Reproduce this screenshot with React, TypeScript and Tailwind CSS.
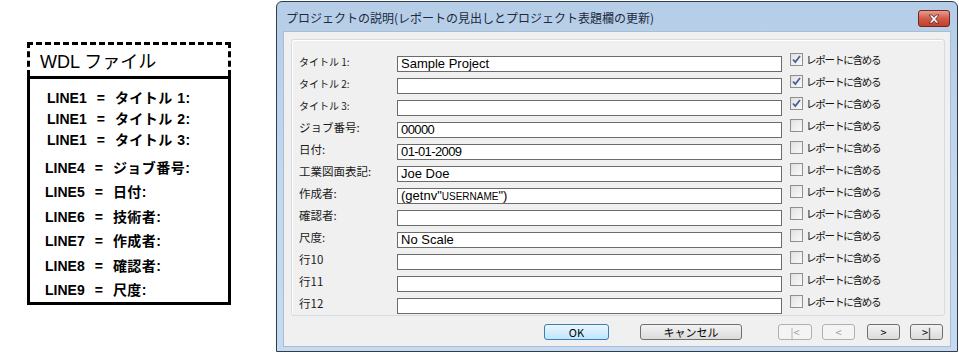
import React from 'react';

const jp = { fontFamily: '"Noto Sans CJK JP", "Liberation Sans", sans-serif' };
const sans = { fontFamily: '"Liberation Sans", "Noto Sans CJK JP", sans-serif' };

type Row = { label: string; value?: React.ReactNode; checked: boolean; small?: boolean };

const rows: Row[] = [
  { label: 'タイトル 1:', value: 'Sample Project', checked: true, small: true },
  { label: 'タイトル 2:', checked: true, small: true },
  { label: 'タイトル 3:', checked: true, small: true },
  { label: 'ジョブ番号:', value: <span className="tracking-[-0.6px]">00000</span>, checked: false },
  { label: '日付:', value: <span className="tracking-[-0.6px]">01-01-2009</span>, checked: false },
  { label: '工業図面表記:', value: 'Joe Doe', checked: false },
  {
    label: '作成者:',
    value: (
      <span>
        (getnv"<span className="text-[10px]">USERNAME</span>")
      </span>
    ),
    checked: false,
  },
  { label: '確認者:', checked: false },
  { label: '尺度:', value: 'No Scale', checked: false },
  { label: '行10', checked: false },
  { label: '行11', checked: false },
  { label: '行12', checked: false },
];

const wdlLines: [string, string][] = [
  ['LINE1', 'タイトル 1:'],
  ['LINE1', 'タイトル 2:'],
  ['LINE1', 'タイトル 3:'],
  ['LINE4', 'ジョブ番号:'],
  ['LINE5', '日付:'],
  ['LINE6', '技術者:'],
  ['LINE7', '作成者:'],
  ['LINE8', '確認者:'],
  ['LINE9', '尺度:'],
];

const CheckBox = ({ checked }: { checked: boolean }) => (
  <div className="w-[13px] h-[13px] border border-[#8e8f8f] bg-gradient-to-br from-[#dcdcdc] to-[#fbfbfb] p-[1px] shrink-0">
    <div className="w-full h-full bg-gradient-to-br from-[#e4e4e4] to-[#f7f7f7] flex items-center justify-center">
      {checked && (
        <svg width="9" height="9" viewBox="0 0 9 9">
          <path d="M1 4.5 L3.3 7 L8 1" fill="none" stroke="#4a5f97" strokeWidth="1.8" />
        </svg>
      )}
    </div>
  </div>
);

const WinButton = ({
  children,
  className,
  variant = 'normal',
}: {
  children: React.ReactNode;
  className: string;
  variant?: 'default' | 'normal' | 'disabled';
}) => (
  <div
    className={`h-[16px] rounded-[3px] border flex items-center justify-center text-[11px] leading-none ${
      variant === 'default'
        ? 'border-[#3c7fb1] bg-gradient-to-b from-[#eaf6fd] to-[#bee6fd] text-black'
        : variant === 'disabled'
        ? 'border-[#adb2b5] bg-[#f4f4f4] text-[#a0a0a0]'
        : 'border-[#707070] bg-gradient-to-b from-[#f2f2f2] to-[#dcdcdc] text-black'
    } ${className}`}
    style={jp}
  >
    {children}
  </div>
);

export default function App() {
  return (
    <div className="w-[959px] h-[355px] bg-white flex items-start overflow-hidden">
      {/* WDL file box */}
      <div className="ml-[27px] mt-[42px] w-[204px] flex flex-col text-black">
        <div className="h-[34px] border-[3px] border-b-0 border-dashed border-black pl-[10px] pt-[5px]">
          <span className="text-[18px] leading-[22px]" style={sans}>
            WDL ファイル
          </span>
        </div>
        <div className="h-[229px] border-[3px] border-black pt-[8px] pl-[15px] flex flex-col">
          {wdlLines.map(([a, b], i) => (
            <div
              key={i}
              className={`flex items-center text-[14px] font-bold leading-[20px] whitespace-pre ${
                i < 3 ? 'h-[21.5px] pl-[2px]' : 'h-[24.6px]'
              } ${i === 3 ? 'mt-[5px]' : ''}`}
              style={sans}
            >
              <span>{a}</span>
              <span className="mx-[10px]">=</span>
              <span className="tracking-[0.5px]">{b}</span>
            </div>
          ))}
        </div>
      </div>

      {/* dialog */}
      <div className="ml-[45px] mt-[1px] w-[682px] h-[351px] border border-[#2f3d4c] rounded-t-[6px] bg-gradient-to-b from-[#b6cde7] via-[#c3d8ef] to-[#c6dbf1] flex flex-col">
        <div className="h-[29px] flex items-start justify-between pl-[9px] pr-[7px]">
          <div className="pt-[9px] text-[12px] leading-[14px] text-[#1b2a3c]" style={jp}>
            プロジェクトの説明(レポートの見出しとプロジェクト表題欄の更新)
          </div>
          <div className="mt-[8px] w-[32px] h-[17px] rounded-[3px] border border-[#6e2a20] bg-gradient-to-b from-[#e69d8f] via-[#d3594a] to-[#c2412c] flex items-center justify-center">
            <svg width="14" height="10" viewBox="0 0 14 10">
              <path
                d="M2 1 H5 L7 3.3 L9 1 H12 L8.6 5 L12 9 H9 L7 6.7 L5 9 H2 L5.4 5 Z"
                fill="#ffffff"
                stroke="#5a2a24"
                strokeWidth="0.8"
              />
            </svg>
          </div>
        </div>

        <div className="mx-[6px] h-[316px] bg-[#f0f0f0] border border-[#a9bdd3] flex flex-col">
          <div className="mt-[7px] ml-[7px] w-[654px] h-[277px] border border-[#d5dbe0] rounded-[3px] shadow-[inset_1px_1px_0_#ffffff] pt-[13px] pl-[7px] flex flex-col">
            {rows.map((r, i) => (
              <div key={i} className="h-[22px] flex items-start shrink-0">
                <div
                  className={`w-[98px] pt-[2px] leading-[13px] text-[#1a1a1a] ${r.small ? 'text-[10px]' : 'text-[11.5px]'}`}
                  style={jp}
                >
                  {r.label}
                </div>
                <div
                  className="mt-[3px] w-[385px] h-[16px] border border-[#6b6b6b] bg-white pl-[3px] text-[13px] leading-[14px] text-black whitespace-pre overflow-hidden"
                  style={sans}
                >
                  {r.value}
                </div>
                <div className="ml-[8px] flex items-start">
                  <CheckBox checked={r.checked} />
                  <span className="ml-[3px] text-[10.5px] tracking-[-1.2px] leading-[13px] text-[#111111]" style={jp}>
                    レポートに含める
                  </span>
                </div>
              </div>
            ))}
          </div>

          <div className="mt-[8px] flex items-start">
            <WinButton variant="default" className="ml-[260px] w-[65px]">
              OK
            </WinButton>
            <WinButton className="ml-[31px] w-[102px]">キャンセル</WinButton>
            <WinButton variant="disabled" className="ml-[36px] w-[34px]">
              |&lt;
            </WinButton>
            <WinButton variant="disabled" className="ml-[10px] w-[33px]">
              &lt;
            </WinButton>
            <WinButton className="ml-[12px] w-[33px]">&gt;</WinButton>
            <WinButton className="ml-[10px] w-[33px]">&gt;|</WinButton>
          </div>
        </div>
      </div>
    </div>
  );
}
